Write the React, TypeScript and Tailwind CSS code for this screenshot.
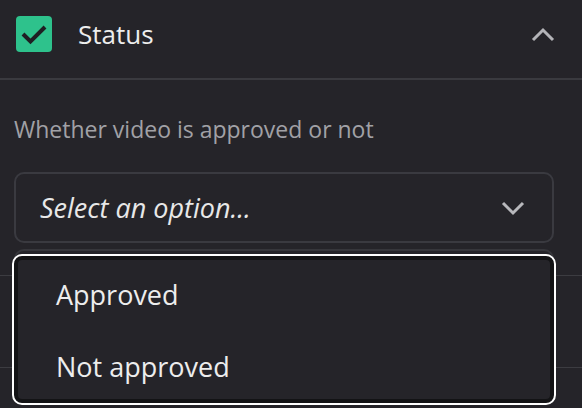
import React from "react";

function CheckBox() {
  return (
    <div className="w-9 h-9 rounded-[4px] bg-[#2ec28c] flex items-center justify-center shrink-0">
      <svg width="36" height="36" viewBox="0 0 36 36" fill="none">
        <path d="M7 18L14.5 25.5L29 11" stroke="#1f1f23" strokeWidth="4" strokeLinejoin="miter" />
      </svg>
    </div>
  );
}

function ChevronUp() {
  return (
    <svg width="24" height="16" viewBox="0 0 24 16" fill="none">
      <path d="M2 14L12 4L22 14" stroke="#b4b4b8" strokeWidth="3" />
    </svg>
  );
}

function ChevronDown() {
  return (
    <svg width="24" height="16" viewBox="0 0 24 16" fill="none">
      <path d="M2 3L12 13L22 3" stroke="#b8b8bc" strokeWidth="3" />
    </svg>
  );
}

export default function App() {
  return (
    <div className="relative w-[582px] h-[408px] overflow-hidden bg-[#252429] font-['Open_Sans',sans-serif]">
      {/* header */}
      <div className="flex items-center h-[78px] pt-4 pb-[26px] pl-4 pr-[27px]">
        <CheckBox />
        <span className="ml-[26px] text-[26px] leading-none text-[#ededed]">Status</span>
        <div className="ml-auto flex items-center">
          <ChevronUp />
        </div>
      </div>
      <div className="h-[2px] bg-[#3a3a3f]" />

      {/* body */}
      <div className="pl-[14px] pr-[28px]">
        <p className="mt-[34px] text-[23px] leading-[30px] text-[#a1a1a6]">
          Whether video is approved or not
        </p>
        <div className="mt-[28px] h-[71px] border-2 border-[#3a3a40] rounded-[10px] flex items-center pl-6 pr-[27px]">
          <span className="italic text-[27px] leading-none text-[#e8e8e8]">Select an option...</span>
          <div className="ml-auto flex items-center">
            <ChevronDown />
          </div>
        </div>
        <div className="mt-[6px] h-[40px] border-2 border-[#36363b] rounded-[10px]" />
      </div>
      <div className="-mt-[14px] h-px bg-[#3c3c41]" />
      <div className="mt-[91px] h-px bg-[#3c3c41]" />

      {/* dropdown menu */}
      <div className="absolute left-[12px] top-[254px] w-[544px] h-[151px] border-2 border-white rounded-[10px] bg-white">
        <div className="h-full border-4 border-[#131315] rounded-[8px] bg-[#252429]">
          <div className="flex flex-col gap-[32px] pt-[15px] pl-[38px]">
            <span className="text-[27px] leading-[40px] text-[#ededed]">Approved</span>
            <span className="text-[27px] leading-[40px] text-[#ededed]">Not approved</span>
          </div>
        </div>
      </div>
    </div>
  );
}
